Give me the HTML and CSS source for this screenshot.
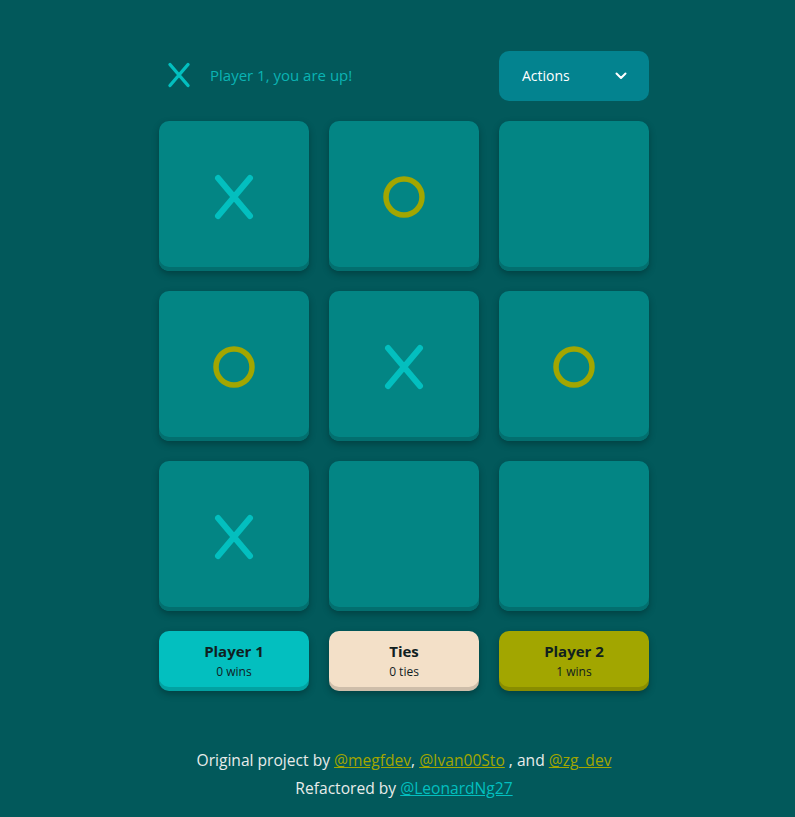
FILE: index.html
```html
<!DOCTYPE html>
<html lang="en">
<head>
<meta charset="utf-8">
<title>Tic Tac Toe</title>
<link rel="stylesheet" href="styles.css">
</head>
<body>
<div class="wrap">
  <main class="game">
    <header class="top">
      <div class="turn">
        <svg class="turn-icon" width="24" height="26" viewBox="0 0 24 26"><path d="M3 2.5 L21 23.5 M21 2.5 L3 23.5" stroke="#03bfbf" stroke-width="3.4" stroke-linecap="round" fill="none"/></svg>
        <span class="turn-text">Player 1, you are up!</span>
      </div>
      <button class="actions">
        <span>Actions</span>
        <svg width="12" height="8" viewBox="0 0 12 8"><path d="M1.5 1.5 L6 6 L10.5 1.5" stroke="#fff" stroke-width="2" fill="none" stroke-linecap="round" stroke-linejoin="round"/></svg>
      </button>
    </header>

    <section class="board">
      <div class="cell"><svg class="mark" width="40" height="46" viewBox="0 0 40 46"><path d="M4 4 L36 42 M36 4 L4 42" stroke="#03bfbf" stroke-width="6" stroke-linecap="round" fill="none"/></svg></div>
      <div class="cell"><svg class="mark" width="44" height="44" viewBox="0 0 44 44"><circle cx="22" cy="22" r="18" stroke="#a2a600" stroke-width="5.5" fill="none"/></svg></div>
      <div class="cell"></div>
      <div class="cell"><svg class="mark" width="44" height="44" viewBox="0 0 44 44"><circle cx="22" cy="22" r="18" stroke="#a2a600" stroke-width="5.5" fill="none"/></svg></div>
      <div class="cell"><svg class="mark" width="40" height="46" viewBox="0 0 40 46"><path d="M4 4 L36 42 M36 4 L4 42" stroke="#03bfbf" stroke-width="6" stroke-linecap="round" fill="none"/></svg></div>
      <div class="cell"><svg class="mark" width="44" height="44" viewBox="0 0 44 44"><circle cx="22" cy="22" r="18" stroke="#a2a600" stroke-width="5.5" fill="none"/></svg></div>
      <div class="cell"><svg class="mark" width="40" height="46" viewBox="0 0 40 46"><path d="M4 4 L36 42 M36 4 L4 42" stroke="#03bfbf" stroke-width="6" stroke-linecap="round" fill="none"/></svg></div>
      <div class="cell"></div>
      <div class="cell"></div>
    </section>

    <section class="scores">
      <div class="score p1"><p class="score-title">Player 1</p><p class="score-sub">0 wins</p></div>
      <div class="score ties"><p class="score-title">Ties</p><p class="score-sub">0 ties</p></div>
      <div class="score p2"><p class="score-title">Player 2</p><p class="score-sub">1 wins</p></div>
    </section>
  </main>

  <footer class="credits">
    <p>Original project by <a class="olive" href="#">@megfdev</a>, <a class="olive" href="#">@Ivan00Sto</a> , and <a class="olive" href="#">@zg_dev</a></p>
    <p>Refactored by <a class="teal" href="#">@LeonardNg27</a></p>
  </footer>
</div>
</body>
</html>
```

FILE: styles.css
```css
html, body {
  margin: 0;
  padding: 0;
}
body {
  background: #02595b;
  font-family: "Open Sans", "DejaVu Sans", sans-serif;
  height: 817px;
  overflow: hidden;
}
.wrap {
  width: 490px;
  margin: 0 auto;
  padding: 51px 0 0 13px;
}
.game {
  display: flex;
  flex-direction: column;
  gap: 20px;
}
.top {
  display: flex;
  align-items: center;
  justify-content: space-between;
  height: 50px;
}
.turn {
  display: flex;
  align-items: center;
  gap: 19px;
  padding-left: 8px;
  margin-top: -2px;
}
.turn-icon {
  display: block;
}
.turn-text {
  color: #0bb3b3;
  font-size: 15px;
}
.actions {
  width: 150px;
  height: 50px;
  border: none;
  border-radius: 10px;
  background: #03838f;
  color: #fff;
  font-family: inherit;
  font-size: 14px;
  font-weight: 500;
  display: flex;
  align-items: center;
  justify-content: space-between;
  padding: 0 22px 1px 23px;
}
.actions svg { display: block; }
.board {
  display: grid;
  grid-template-columns: repeat(3, 150px);
  grid-auto-rows: 150px;
  gap: 20px;
}
.cell {
  background: #038584;
  border-radius: 10px;
  box-shadow: inset 0 -4px 0 #036f6f, 0 3px 7px rgba(0, 0, 0, 0.28);
  display: flex;
  align-items: center;
  justify-content: center;
}
.mark {
  display: block;
  margin-top: 1px;
}
.scores {
  display: grid;
  grid-template-columns: repeat(3, 150px);
  gap: 20px;
}
.score {
  height: 60px;
  border-radius: 10px;
  display: flex;
  flex-direction: column;
  align-items: center;
  justify-content: center;
  color: #10201f;
  padding-bottom: 2px;
  box-sizing: border-box;
  box-shadow: inset 0 -4px 0 rgba(0, 0, 0, 0.15), 0 3px 7px rgba(0, 0, 0, 0.28);
}
.score p { margin: 0; }
.score-title {
  font-weight: 700;
  font-size: 15px;
  line-height: 20px;
}
.score-sub {
  font-size: 12px;
  line-height: 16px;
  margin-top: 3px !important;
}
.p1 { background: #03bfbf; }
.ties { background: #f3e0c8; }
.p2 { background: #a2a600; }
.credits {
  margin-top: 59px;
  text-align: center;
  color: #e8ecea;
  font-size: 15.6px;
}
.credits p {
  margin: 0 0 8px;
  line-height: 20px;
}
.olive { color: #a2a600; }
.teal { color: #03bfbf; }
```
